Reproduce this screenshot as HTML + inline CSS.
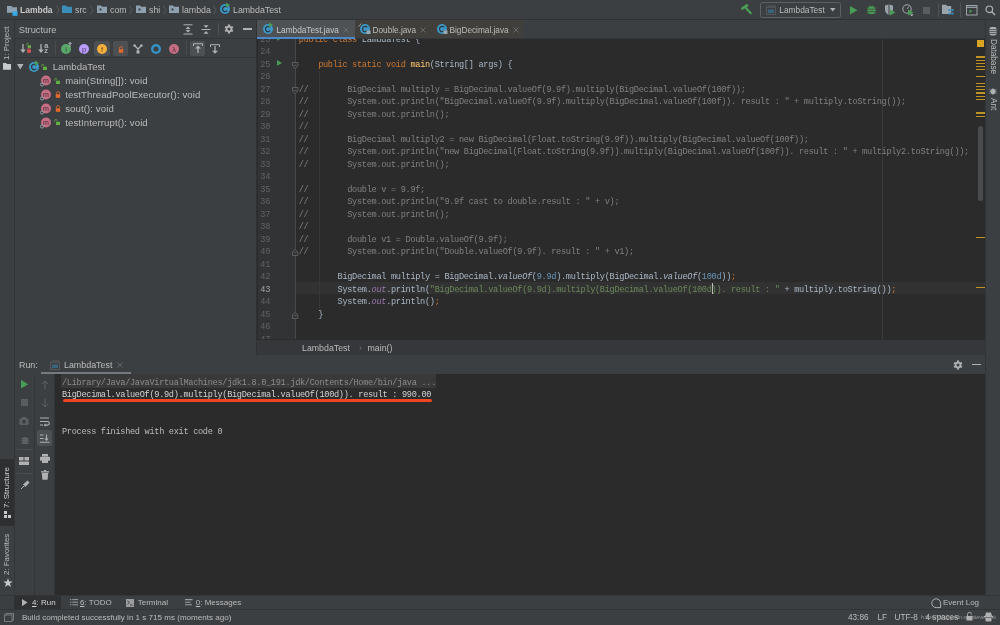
<!DOCTYPE html>
<html><head><meta charset="utf-8">
<style>
*{margin:0;padding:0;box-sizing:border-box}
html,body{width:1000px;height:625px;overflow:hidden;background:#3c3f41}
body{will-change:transform;position:relative;font-family:"Liberation Sans",sans-serif;color:#bbbbbb}
.a{position:absolute}
svg{position:absolute;overflow:visible}
.t{position:absolute;white-space:nowrap;line-height:1}
#topbar{left:0;top:0;width:1000px;height:20px;background:#3c3f41;border-bottom:1px solid #2f3133}
#leftstrip{left:0;top:20px;width:15px;height:575px;background:#3c3f41;border-right:1px solid #323436}
#struct{left:15px;top:20px;width:242px;height:335px;background:#3c3f41;border-right:1px solid #2f3133}
#editor{left:257px;top:20px;width:728px;height:335px;background:#2b2b2b;overflow:hidden}
#rightstrip{left:985px;top:20px;width:15px;height:575px;background:#3c3f41;border-left:1px solid #323436}
#run{left:15px;top:355px;width:970px;height:240px;background:#2b2b2b;overflow:hidden}
#bottombar{left:0;top:595px;width:1000px;height:14px;background:#3c3f41;border-top:1px solid #323436}
#status{left:0;top:609px;width:1000px;height:16px;background:#3c3f41;border-top:1px solid #323436}
.cl{position:absolute;left:0;height:12.505px;line-height:12.505px;white-space:pre;font-family:"Liberation Mono",monospace;font-size:8.6px;letter-spacing:-0.3px}
.ln{position:absolute;left:0;width:13.0px;text-align:right;height:12.505px;line-height:12.505px;font-family:"Liberation Mono",monospace;font-size:8.6px;letter-spacing:-0.3px}
</style></head><body>
<div id="topbar" class="a">
<svg style="left:7px;top:5.6px" width="11" height="10"><path d="M0 0h4.5l1 1.3h4.5v5.5h-10z" fill="#8fa1b0"/><rect x="5.5" y="5.2" width="5" height="4.6" fill="#3ba8e6"/></svg>
<div class="t" style="left:20px;top:6.0px;font-size:8.5px;color:#c8c8c8;"><b>Lambda</b></div>
<svg style="left:55.5px;top:5px" width="4" height="10"><path d="M0.5 0.5l2.5 4.5l-2.5 4.5" stroke="#5a5d60" stroke-width="0.8" fill="none"/></svg>
<svg style="left:62px;top:4.6px" width="10" height="8"><path d="M0 0.5h4l1 1.2h5v6.3h-10z" fill="#3b8dba"/></svg>
<div class="t" style="left:75px;top:6.0px;font-size:8.8px;color:#bbbbbb;">src</div>
<svg style="left:89.5px;top:5px" width="4" height="10"><path d="M0.5 0.5l2.5 4.5l-2.5 4.5" stroke="#5a5d60" stroke-width="0.8" fill="none"/></svg>
<svg style="left:97px;top:4.6px" width="10" height="8"><path d="M0 0.5h4l1 1.2h5v6.3h-10z" fill="#8fa1b0"/><rect x="2.5" y="3.5" width="2" height="2" fill="#3c3f41"/></svg>
<div class="t" style="left:110px;top:6.0px;font-size:8.8px;color:#bbbbbb;">com</div>
<svg style="left:129.3px;top:5px" width="4" height="10"><path d="M0.5 0.5l2.5 4.5l-2.5 4.5" stroke="#5a5d60" stroke-width="0.8" fill="none"/></svg>
<svg style="left:136px;top:4.6px" width="10" height="8"><path d="M0 0.5h4l1 1.2h5v6.3h-10z" fill="#8fa1b0"/><rect x="2.5" y="3.5" width="2" height="2" fill="#3c3f41"/></svg>
<div class="t" style="left:149px;top:6.0px;font-size:8.8px;color:#bbbbbb;">shi</div>
<svg style="left:163px;top:5px" width="4" height="10"><path d="M0.5 0.5l2.5 4.5l-2.5 4.5" stroke="#5a5d60" stroke-width="0.8" fill="none"/></svg>
<svg style="left:169px;top:4.6px" width="10" height="8"><path d="M0 0.5h4l1 1.2h5v6.3h-10z" fill="#8fa1b0"/><rect x="2.5" y="3.5" width="2" height="2" fill="#3c3f41"/></svg>
<div class="t" style="left:182px;top:6.0px;font-size:8.8px;color:#bbbbbb;">lambda</div>
<svg style="left:213px;top:5px" width="4" height="10"><path d="M0.5 0.5l2.5 4.5l-2.5 4.5" stroke="#5a5d60" stroke-width="0.8" fill="none"/></svg>
<svg style="left:220px;top:4.3px" width="10" height="10"><circle cx="5" cy="5" r="5" fill="#3d98c6"/><path d="M7.2 3.4a2.6 2.6 0 1 0 0 3.2" stroke="#2b3a45" stroke-width="1.3" fill="none"/><path d="M6 -1.5l4 2.5l-4 2.5z" fill="#499c54"/></svg>
<div class="t" style="left:233px;top:6.0px;font-size:8.8px;color:#bbbbbb;">LambdaTest</div>
<svg style="left:740px;top:3px" width="13" height="13"><path d="M2.3 5.5L7 2.4" stroke="#4a9f55" stroke-width="2.6" stroke-linecap="round"/><path d="M5.4 4.5L10.8 10.2" stroke="#4a9f55" stroke-width="2.1" stroke-linecap="round"/></svg>
<div class="a" style="left:760px;top:2px;width:81px;height:15.5px;border:1px solid #5e6163;border-radius:2.5px"></div>
<svg style="left:766px;top:5px" width="11" height="10"><path d="M1.5 1h8" stroke="#5d6063" stroke-width="0.8"/><rect x="0.5" y="2.2" width="9" height="7.3" fill="#3c3f41" stroke="#5d6063" stroke-width="0.8"/><rect x="2" y="4.5" width="6" height="3.5" fill="#3a6580"/></svg>
<div class="t" style="left:779.3px;top:6.2px;font-size:8.35px;color:#bbbbbb;">LambdaTest</div>
<svg style="left:830px;top:8px" width="6" height="4"><path d="M0 0h5.5l-2.75 3.5z" fill="#afb1b3"/></svg>
<svg style="left:850px;top:5.5px" width="8" height="9"><path d="M0 0l7.5 4.3l-7.5 4.3z" fill="#499c54"/></svg>
<svg style="left:866px;top:4px" width="11" height="11"><ellipse cx="5.5" cy="6.3" rx="3.3" ry="4" fill="#499c54"/><path d="M1 4h9M0.8 6.5h9.4M1 9h9M3.5 1.5l1 1.5M7.5 1.5l-1 1.5" stroke="#499c54" stroke-width="0.9"/><path d="M3 5.3h5M3 7.6h5" stroke="#3c3f41" stroke-width="0.7"/></svg>
<svg style="left:884px;top:4px" width="12" height="12"><path d="M1 1.5l4-1l4 1v4c0 3-2 4.5-4 5.5c-2-1-4-2.5-4-5.5z" fill="#9aa3aa"/><path d="M5 0.5v10.5" stroke="#3c3f41" stroke-width="1"/><path d="M6 5.5l5.5 3l-5.5 3z" fill="#499c54"/></svg>
<svg style="left:902px;top:4px" width="12" height="12"><circle cx="5" cy="5" r="4.2" fill="none" stroke="#9aa3aa" stroke-width="1.1"/><path d="M5 5l1.8-2.5" stroke="#9aa3aa" stroke-width="1"/><path d="M6 5.5l5.5 3l-5.5 3z" fill="#499c54"/><path d="M8 10.5h3.5l-1.75 1.5z" fill="#ddd"/></svg>
<div class="a" style="left:922.5px;top:7px;width:7px;height:6.5px;background:#5a5c5e"></div>
<div class="a" style="left:937.5px;top:3px;width:1px;height:14px;background:#515456"></div>
<svg style="left:942px;top:4px" width="12" height="12"><path d="M0 0.8h4.2l1 1.2h4v8h-9.2z" fill="#9aa3aa"/><rect x="6.5" y="5" width="2" height="2" fill="#3592c4"/><rect x="9.5" y="5" width="2" height="2" fill="#3592c4"/><rect x="6.5" y="8.5" width="2" height="2" fill="#3592c4"/><rect x="9.5" y="8.5" width="2" height="2" fill="#3592c4"/></svg>
<div class="a" style="left:960px;top:3px;width:1px;height:14px;background:#515456"></div>
<svg style="left:966px;top:4.5px" width="12" height="11"><rect x="0.5" y="0.5" width="10.5" height="9.5" fill="none" stroke="#9aa3aa" stroke-width="1"/><path d="M0.5 2.3h10.5" stroke="#9aa3aa" stroke-width="1.2"/><path d="M3.5 4.5l3 1.8l-3 1.8z" fill="#499c54"/></svg>
<svg style="left:985px;top:4.5px" width="11" height="11"><circle cx="4.3" cy="4.3" r="3.3" fill="none" stroke="#afb1b3" stroke-width="1.2"/><path d="M6.8 6.8l3.2 3.2" stroke="#afb1b3" stroke-width="1.4"/></svg>
</div>
<div id="leftstrip" class="a"></div>
<div id="struct" class="a">
  <div class="a" style="left:0;top:0;width:241px;height:19px;border-bottom:1px solid #323436"></div>
  <div class="a" style="left:0;top:19px;width:241px;height:19px;border-bottom:1px solid #323436"></div>
</div>
<div id="editor" class="a">
  <div class="a" style="left:0;top:0;width:729px;height:19px;background:#3c3f41"></div>
  <div class="a" style="left:0;top:0;width:97.5px;height:19px;background:#4e5254"></div>
  <div class="a" style="left:97.5px;top:0;width:168px;height:18px;background:#403f3c"></div>
  <div class="a" style="left:0;top:18px;width:728px;height:1px;background:#333537"></div>
  <div class="a" style="left:0;top:16.5px;width:97.5px;height:2.5px;background:#4a88c7"></div>
  <div id="view" class="a" style="left:0;top:19px;width:729px;height:300px;overflow:hidden">
    <div class="a" style="left:0;top:0;width:38px;height:300px;background:#313335;border-left:1px solid #2b2b2b"></div>
    <div class="a" style="left:38px;top:0;width:1px;height:300px;background:#45484a"></div>
    <div class="a" style="left:39px;top:243.3px;width:690px;height:12.1px;background:#323232"></div>
    <div class="a" style="left:625px;top:0;width:1px;height:300px;background:#3b3b3b"></div>
    <div class="a" style="left:0;top:-5.255px;width:34px;height:320px">
<div class="ln" style="top:0.00px;color:#606366">23</div>
<div class="ln" style="top:12.51px;color:#606366">24</div>
<div class="ln" style="top:25.01px;color:#606366">25</div>
<div class="ln" style="top:37.52px;color:#606366">26</div>
<div class="ln" style="top:50.02px;color:#606366">27</div>
<div class="ln" style="top:62.53px;color:#606366">28</div>
<div class="ln" style="top:75.03px;color:#606366">29</div>
<div class="ln" style="top:87.54px;color:#606366">30</div>
<div class="ln" style="top:100.04px;color:#606366">31</div>
<div class="ln" style="top:112.55px;color:#606366">32</div>
<div class="ln" style="top:125.05px;color:#606366">33</div>
<div class="ln" style="top:137.56px;color:#606366">34</div>
<div class="ln" style="top:150.06px;color:#606366">35</div>
<div class="ln" style="top:162.56px;color:#606366">36</div>
<div class="ln" style="top:175.07px;color:#606366">37</div>
<div class="ln" style="top:187.58px;color:#606366">38</div>
<div class="ln" style="top:200.08px;color:#606366">39</div>
<div class="ln" style="top:212.59px;color:#606366">40</div>
<div class="ln" style="top:225.09px;color:#606366">41</div>
<div class="ln" style="top:237.60px;color:#606366">42</div>
<div class="ln" style="top:250.10px;color:#a4a3a3">43</div>
<div class="ln" style="top:262.61px;color:#606366">44</div>
<div class="ln" style="top:275.11px;color:#606366">45</div>
<div class="ln" style="top:287.62px;color:#606366">46</div>
<div class="ln" style="top:300.12px;color:#606366">47</div>
    </div>
    <div class="a" style="left:41.7px;top:-5.255px;width:690px;height:320px">
<div class="cl" style="top:0.00px"><span style="color:#cc7832">public class </span><span style="color:#a9b7c6">LambdaTest {</span></div>
<div class="cl" style="top:12.51px"></div>
<div class="cl" style="top:25.01px">    <span style="color:#cc7832">public static void </span><span style="color:#ffc66d">main</span><span style="color:#a9b7c6">(String[] args) {</span></div>
<div class="cl" style="top:37.52px"></div>
<div class="cl" style="top:50.02px"><span style="color:#808080">//        BigDecimal multiply = BigDecimal.valueOf(9.9f).multiply(BigDecimal.valueOf(100f));</span></div>
<div class="cl" style="top:62.53px"><span style="color:#808080">//        System.out.println("BigDecimal.valueOf(9.9f).multiply(BigDecimal.valueOf(100f)). result : " + multiply.toString());</span></div>
<div class="cl" style="top:75.03px"><span style="color:#808080">//        System.out.println();</span></div>
<div class="cl" style="top:87.54px"><span style="color:#808080">//</span></div>
<div class="cl" style="top:100.04px"><span style="color:#808080">//        BigDecimal multiply2 = new BigDecimal(Float.toString(9.9f)).multiply(BigDecimal.valueOf(100f));</span></div>
<div class="cl" style="top:112.55px"><span style="color:#808080">//        System.out.println("new BigDecimal(Float.toString(9.9f)).multiply(BigDecimal.valueOf(100f)). result : " + multiply2.toString());</span></div>
<div class="cl" style="top:125.05px"><span style="color:#808080">//        System.out.println();</span></div>
<div class="cl" style="top:137.56px"></div>
<div class="cl" style="top:150.06px"><span style="color:#808080">//        double v = 9.9f;</span></div>
<div class="cl" style="top:162.56px"><span style="color:#808080">//        System.out.println("9.9f cast to double.result : " + v);</span></div>
<div class="cl" style="top:175.07px"><span style="color:#808080">//        System.out.println();</span></div>
<div class="cl" style="top:187.58px"><span style="color:#808080">//</span></div>
<div class="cl" style="top:200.08px"><span style="color:#808080">//        double v1 = Double.valueOf(9.9f);</span></div>
<div class="cl" style="top:212.59px"><span style="color:#808080">//        System.out.println("Double.valueOf(9.9f). result : " + v1);</span></div>
<div class="cl" style="top:225.09px"></div>
<div class="cl" style="top:237.60px">        <span style="color:#a9b7c6">BigDecimal multiply = BigDecimal.</span><span style="color:#a9b7c6;font-style:italic">valueOf</span><span style="color:#a9b7c6">(</span><span style="color:#6897bb">9.9d</span><span style="color:#a9b7c6">).multiply(BigDecimal.</span><span style="color:#a9b7c6;font-style:italic">valueOf</span><span style="color:#a9b7c6">(</span><span style="color:#6897bb">100d</span><span style="color:#a9b7c6">))</span><span style="color:#cc7832">;</span></div>
<div class="cl" style="top:250.10px">        <span style="color:#a9b7c6">System.</span><span style="color:#9876aa;font-style:italic">out</span><span style="color:#a9b7c6">.println(</span><span style="color:#6a8759">"BigDecimal.valueOf(9.9d).multiply(BigDecimal.valueOf(100d)). result : "</span><span style="color:#a9b7c6"> + multiply.toString())</span><span style="color:#cc7832">;</span></div>
<div class="cl" style="top:262.61px">        <span style="color:#a9b7c6">System.</span><span style="color:#9876aa;font-style:italic">out</span><span style="color:#a9b7c6">.println()</span><span style="color:#cc7832">;</span></div>
<div class="cl" style="top:275.11px">    <span style="color:#a9b7c6">}</span></div>
<div class="cl" style="top:287.62px"></div>
<div class="cl" style="top:300.12px"></div>
    </div>
  </div>
  <div class="a" style="left:0;top:319.5px;width:729px;height:15.5px;background:#35373a"></div>
  <div class="t" style="left:45px;top:323.5px;font-size:8.8px">LambdaTest</div>
  <div class="t" style="left:102px;top:323.5px;font-size:8.8px;color:#777">›</div>
  <div class="t" style="left:110.5px;top:323.5px;font-size:8.8px">main()</div>
</div>
<div id="rightstrip" class="a"></div>
<div class="t" style="left:18.8px;top:25.5px;font-size:9.3px;color:#bbbbbb;">Structure</div>
<svg style="left:183px;top:24px" width="10" height="11"><path d="M0.5 0.8h9M0.5 10h9" stroke="#afb1b3" stroke-width="1"/><path d="M5 2.5l-2.5 2.5h5zM5 8.5l-2.5-2.5h5z" fill="#afb1b3"/></svg>
<svg style="left:201px;top:24px" width="10" height="11"><path d="M0.5 5.5h9" stroke="#afb1b3" stroke-width="1"/><path d="M5 4l-2.5-2.8h5zM5 7l-2.5 2.8h5z" fill="#afb1b3"/></svg>
<div class="a" style="left:217.5px;top:23px;width:1px;height:12px;background:#515456"></div>
<svg style="left:224px;top:24.3px" width="10" height="10"><path d="M3.73 0.58 L6.27 0.58 L5.91 1.72 L7.38 2.57 L8.19 1.69 L9.46 3.89 L8.29 4.15 L8.29 5.85 L9.46 6.11 L8.19 8.31 L7.38 7.43 L5.91 8.28 L6.27 9.42 L3.73 9.42 L4.09 8.28 L2.62 7.43 L1.81 8.31 L0.54 6.11 L1.71 5.85 L1.71 4.15 L0.54 3.89 L1.81 1.69 L2.62 2.57 L4.09 1.72Z" fill="#afb1b3"/><circle cx="5" cy="5" r="1.5" fill="#3c3f41"/></svg>
<div class="a" style="left:243.3px;top:28.3px;width:8.7px;height:1.7px;background:#afb1b3"></div>
<svg style="left:19.5px;top:43px" width="12" height="11"><path d="M3 1v6.5" stroke="#afb1b3" stroke-width="1.3"/><path d="M0.2 6.6h5.6l-2.8 3.4z" fill="#afb1b3"/><path d="M6.6 2.2V1.4a1 1 0 0 1 2 0" stroke="#62b543" stroke-width="0.8" fill="none"/><rect x="7.6" y="2.3" width="3.4" height="2.6" fill="#62b543"/><path d="M7.8 7V6a1.1 1.1 0 0 1 2.2 0v1" stroke="#e05555" stroke-width="0.8" fill="none"/><rect x="7.2" y="6.8" width="3.6" height="3" fill="#e05555"/></svg>
<svg style="left:38px;top:43px" width="12" height="11"><path d="M3 1v6.5" stroke="#afb1b3" stroke-width="1.3"/><path d="M0.2 6.6h5.6l-2.8 3.4z" fill="#afb1b3"/><text x="8.2" y="5" font-size="7.4" text-anchor="middle" fill="#afb1b3" font-family="Liberation Sans" font-weight="bold">a</text><text x="8.2" y="10.3" font-size="7.4" text-anchor="middle" fill="#afb1b3" font-family="Liberation Sans" font-weight="bold">z</text></svg>
<div class="a" style="left:54.5px;top:41px;width:1px;height:14px;background:#4a4d4f"></div>
<svg style="left:61px;top:43.5px" width="10" height="10"><circle cx="5" cy="5" r="5" fill="#59a869"/><text x="5" y="7.6" font-size="7.5" text-anchor="middle" fill="#2d4a31" font-family="Liberation Sans">i</text></svg>
<svg style="left:68px;top:42px" width="4" height="5"><path d="M2 0.5v4M0.5 2l1.5-1.5l1.5 1.5" stroke="#c9d2d8" stroke-width="0.9" fill="none"/></svg>
<svg style="left:79px;top:43.5px" width="10" height="10"><circle cx="5" cy="5" r="5" fill="#b99bf8"/><text x="5" y="7.6" font-size="7.5" text-anchor="middle" fill="#4a3a6a" font-family="Liberation Sans">p</text></svg>
<div class="a" style="left:94.3px;top:41px;width:15.5px;height:15px;background:#4c5052;border-radius:2px"></div>
<svg style="left:97px;top:43.5px" width="10" height="10"><circle cx="5" cy="5" r="5" fill="#f4af3d"/><text x="5" y="7.6" font-size="7.5" text-anchor="middle" fill="#6a4a1a" font-family="Liberation Sans">f</text></svg>
<div class="a" style="left:112.5px;top:41px;width:15.5px;height:15px;background:#4c5052;border-radius:2px"></div>
<svg style="left:117.5px;top:45.5px" width="6" height="8"><path d="M1.4 3.2V2.2a1.6 1.6 0 0 1 3.2 0v1" stroke="#e06b2b" stroke-width="0.8" fill="none"/><rect x="0.8" y="3.2" width="4.4" height="3.6" fill="#e06b2b"/></svg>
<svg style="left:133px;top:43.5px" width="10" height="10"><path d="M1.5 1.5l3.5 3.5l3.5-3.5M5 5v4" stroke="#afb1b3" stroke-width="1.3" fill="none"/><circle cx="1.5" cy="1.5" r="1.2" fill="#afb1b3"/><circle cx="8.5" cy="1.5" r="1.2" fill="#afb1b3"/><rect x="3.5" y="6.5" width="3" height="3" fill="#afb1b3"/></svg>
<svg style="left:151px;top:43.5px" width="10" height="10"><circle cx="5" cy="5" r="3.8" fill="none" stroke="#3592c4" stroke-width="2.4"/></svg>
<svg style="left:169px;top:43.5px" width="10" height="10"><circle cx="5" cy="5" r="5" fill="#c36e84"/><text x="5" y="7.6" font-size="7.5" text-anchor="middle" fill="#5a2a37" font-family="Liberation Sans">λ</text></svg>
<div class="a" style="left:185.5px;top:41px;width:1px;height:14px;background:#4a4d4f"></div>
<div class="a" style="left:189.8px;top:41px;width:15px;height:15px;background:#4c5052;border-radius:2px"></div>
<svg style="left:192.5px;top:43px" width="10" height="11"><path d="M0.5 3V0.7h9V3" stroke="#afb1b3" stroke-width="1" fill="none"/><path d="M5 10V4" stroke="#afb1b3" stroke-width="1.3"/><path d="M2 5.5l3-3l3 3z" fill="#afb1b3"/></svg>
<svg style="left:210px;top:44px" width="10" height="11"><path d="M0.5 3V0.7h9V3" stroke="#afb1b3" stroke-width="1" fill="none"/><path d="M5 2v6" stroke="#afb1b3" stroke-width="1.3"/><path d="M2 6.8l3 3l3-3z" fill="#afb1b3"/></svg>
<svg style="left:17px;top:63.5px" width="7" height="6"><path d="M0 0h6.5l-3.25 5.5z" fill="#afb1b3"/></svg>
<svg style="left:29px;top:61.5px" width="10" height="10"><circle cx="5" cy="5" r="5" fill="#3d98c6"/><path d="M7.2 3.4a2.6 2.6 0 1 0 0 3.2" stroke="#2b3a45" stroke-width="1.3" fill="none"/><path d="M6 -1.5l4 2.5l-4 2.5z" fill="#499c54"/></svg>
<svg style="left:41px;top:63.5px" width="7" height="7"><path d="M0.7 2.6V1.6a1.1 1.1 0 0 1 2.2 0" stroke="#62b543" stroke-width="0.8" fill="none"/><rect x="2.1" y="2.7" width="3.8" height="3.3" fill="#62b543"/></svg>
<div class="t" style="left:52.7px;top:62.1px;font-size:9.6px;color:#bbbbbb;">LambdaTest</div>
<svg style="left:40.4px;top:75.1px" width="12" height="12"><circle cx="6" cy="5.5" r="5" fill="#c36e84"/><text x="6" y="7.8" font-size="7" text-anchor="middle" fill="#4a2a33" font-family="Liberation Sans">m</text><circle cx="2" cy="9.5" r="1.6" fill="none" stroke="#9aa7b0" stroke-width="0.9"/></svg>
<svg style="left:54px;top:78.0px" width="7" height="7"><path d="M0.7 2.6V1.6a1.1 1.1 0 0 1 2.2 0" stroke="#62b543" stroke-width="0.8" fill="none"/><rect x="2.1" y="2.7" width="3.8" height="3.3" fill="#62b543"/></svg>
<div class="t" style="left:65.2px;top:76.1px;font-size:9.6px;color:#bbbbbb;letter-spacing:0.1px">main(String[]): void</div>
<svg style="left:40.4px;top:88.89999999999999px" width="12" height="12"><circle cx="6" cy="5.5" r="5" fill="#c36e84"/><text x="6" y="7.8" font-size="7" text-anchor="middle" fill="#4a2a33" font-family="Liberation Sans">m</text><circle cx="2" cy="9.5" r="1.6" fill="none" stroke="#9aa7b0" stroke-width="0.9"/></svg>
<svg style="left:54.5px;top:90.8px" width="6" height="8"><path d="M1.4 3.2V2.2a1.6 1.6 0 0 1 3.2 0v1" stroke="#e06b2b" stroke-width="0.8" fill="none"/><rect x="0.8" y="3.2" width="4.4" height="3.6" fill="#e06b2b"/></svg>
<div class="t" style="left:65.2px;top:89.89999999999999px;font-size:9.6px;color:#bbbbbb;letter-spacing:0.1px">testThreadPoolExecutor(): void</div>
<svg style="left:40.4px;top:102.69999999999999px" width="12" height="12"><circle cx="6" cy="5.5" r="5" fill="#c36e84"/><text x="6" y="7.8" font-size="7" text-anchor="middle" fill="#4a2a33" font-family="Liberation Sans">m</text><circle cx="2" cy="9.5" r="1.6" fill="none" stroke="#9aa7b0" stroke-width="0.9"/></svg>
<svg style="left:54.5px;top:104.6px" width="6" height="8"><path d="M1.4 3.2V2.2a1.6 1.6 0 0 1 3.2 0v1" stroke="#e06b2b" stroke-width="0.8" fill="none"/><rect x="0.8" y="3.2" width="4.4" height="3.6" fill="#e06b2b"/></svg>
<div class="t" style="left:65.2px;top:103.69999999999999px;font-size:9.6px;color:#bbbbbb;letter-spacing:0.1px">sout(): void</div>
<svg style="left:40.4px;top:116.5px" width="12" height="12"><circle cx="6" cy="5.5" r="5" fill="#c36e84"/><text x="6" y="7.8" font-size="7" text-anchor="middle" fill="#4a2a33" font-family="Liberation Sans">m</text><circle cx="2" cy="9.5" r="1.6" fill="none" stroke="#9aa7b0" stroke-width="0.9"/></svg>
<svg style="left:54px;top:119.4px" width="7" height="7"><path d="M0.7 2.6V1.6a1.1 1.1 0 0 1 2.2 0" stroke="#62b543" stroke-width="0.8" fill="none"/><rect x="2.1" y="2.7" width="3.8" height="3.3" fill="#62b543"/></svg>
<div class="t" style="left:65.2px;top:117.5px;font-size:9.6px;color:#bbbbbb;letter-spacing:0.1px">testInterrupt(): void</div>
<div id="run" class="a">
  <div class="a" style="left:0;top:0;width:972px;height:19px;background:#3c3f41"></div>
  <div class="a" style="left:0;top:19px;width:20px;height:221px;background:#3c3f41;border-right:1px solid #333537"></div>
  <div class="a" style="left:20px;top:19px;width:20px;height:221px;background:#3c3f41;border-right:1px solid #333537"></div>
</div>
<div id="bottombar" class="a"></div>
<div id="status" class="a"></div>
<div class="t" style="left:3.4px;top:59.5px;font-size:7.9px;color:#bbbbbb;transform-origin:0 0;transform:rotate(-90deg)">1: Project</div>
<svg style="left:3.2px;top:63px" width="8" height="7"><path d="M0 0h3l1 1h4v5.8h-8z" fill="#c7c9cb"/></svg>
<div class="a" style="left:0;top:459px;width:14px;height:67px;background:#2d2f31"></div>
<div class="t" style="left:3.4px;top:508.3px;font-size:7.9px;color:#d0d0d0;transform-origin:0 0;transform:rotate(-90deg)">7: Structure</div>
<svg style="left:4px;top:511.3px" width="7" height="7"><rect x="0" y="0" width="3" height="3" fill="#c7c9cb"/><rect x="0" y="4" width="3" height="3" fill="#c7c9cb"/><rect x="4" y="4" width="3" height="3" fill="#c7c9cb"/></svg>
<div class="t" style="left:3.4px;top:574.8px;font-size:7.9px;color:#bbbbbb;transform-origin:0 0;transform:rotate(-90deg)">2: Favorites</div>
<svg style="left:2.5px;top:577.5px" width="10" height="10"><path d="M5 0l1.2 3.4h3.6l-2.9 2.2l1.1 3.5l-3-2.2l-3 2.2l1.1-3.5l-2.9-2.2h3.6z" fill="#c7c9cb"/></svg>
<svg style="left:989px;top:26.5px" width="8" height="9"><rect x="0.5" y="0" width="7" height="8.5" rx="2" fill="#afb1b3"/><path d="M0.5 2.6h7M0.5 4.6h7M0.5 6.6h7" stroke="#3c3f41" stroke-width="0.8"/></svg>
<div class="t" style="left:988.5px;top:39px;font-size:8.2px;color:#bbbbbb;transform-origin:0 0;transform:rotate(90deg) translateY(-100%)">Database</div>
<svg style="left:989px;top:86.5px" width="8" height="8"><ellipse cx="4" cy="4.5" rx="2.2" ry="3" fill="#afb1b3"/><path d="M0.5 2.5l7 4M7.5 2.5l-7 4M0.5 4.5h7" stroke="#afb1b3" stroke-width="0.7"/></svg>
<div class="t" style="left:988.5px;top:97.5px;font-size:8.2px;color:#bbbbbb;transform-origin:0 0;transform:rotate(90deg) translateY(-100%)">Ant</div>
<div class="a" style="left:976.8px;top:40px;width:7.2px;height:7.3px;background:#d8a424"></div>
<div class="a" style="left:975.5px;top:56.3px;width:9.5px;height:1.3px;background:#c19322"></div>
<div class="a" style="left:975.5px;top:59.5px;width:9.5px;height:1.3px;background:#c19322"></div>
<div class="a" style="left:975.5px;top:62.5px;width:9.5px;height:1.3px;background:#c19322"></div>
<div class="a" style="left:975.5px;top:65.9px;width:9.5px;height:1.3px;background:#c19322"></div>
<div class="a" style="left:975.5px;top:69.2px;width:9.5px;height:1.3px;background:#c19322"></div>
<div class="a" style="left:975.5px;top:75.8px;width:9.5px;height:1.3px;background:#c19322"></div>
<div class="a" style="left:975.5px;top:82.5px;width:9.5px;height:1.3px;background:#c19322"></div>
<div class="a" style="left:975.5px;top:85.7px;width:9.5px;height:1.3px;background:#c19322"></div>
<div class="a" style="left:975.5px;top:89.1px;width:9.5px;height:1.3px;background:#c19322"></div>
<div class="a" style="left:975.5px;top:92.3px;width:9.5px;height:1.3px;background:#c19322"></div>
<div class="a" style="left:975.5px;top:95.6px;width:9.5px;height:1.3px;background:#c19322"></div>
<div class="a" style="left:975.5px;top:99.2px;width:9.5px;height:1.3px;background:#c19322"></div>
<div class="a" style="left:975.5px;top:112.3px;width:9.5px;height:1.3px;background:#c19322"></div>
<div class="a" style="left:975.5px;top:115.5px;width:9.5px;height:1.3px;background:#c19322"></div>
<div class="a" style="left:975.5px;top:237.2px;width:9.5px;height:1.3px;background:#c19322"></div>
<div class="a" style="left:975.5px;top:287.0px;width:9.5px;height:1.3px;background:#c19322"></div>
<div class="a" style="left:978.2px;top:126px;width:5.3px;height:75px;background:#4a4b4c;border-radius:2.6px"></div>
<div class="t" style="left:19px;top:360.8px;font-size:8.9px;color:#bbbbbb;">Run:</div>
<svg style="left:50.3px;top:360px" width="11" height="10"><path d="M1.5 1h8" stroke="#5d6063" stroke-width="0.8"/><rect x="0.5" y="2.2" width="9" height="7.3" fill="#3c3f41" stroke="#5d6063" stroke-width="0.8"/><rect x="2" y="4.5" width="6" height="3.5" fill="#3a6580"/></svg>
<div class="t" style="left:64px;top:360.8px;font-size:8.9px;color:#bbbbbb;">LambdaTest</div>
<svg style="left:117px;top:362px" width="6" height="6"><path d="M0.5 0.5l5 5M5.5 0.5l-5 5" stroke="#6a6d70" stroke-width="0.9"/></svg>
<div class="a" style="left:41.4px;top:372.3px;width:89.2px;height:2.2px;background:#747a80"></div>
<svg style="left:952.8px;top:359.8px" width="10" height="10"><path d="M3.73 0.58 L6.27 0.58 L5.91 1.72 L7.38 2.57 L8.19 1.69 L9.46 3.89 L8.29 4.15 L8.29 5.85 L9.46 6.11 L8.19 8.31 L7.38 7.43 L5.91 8.28 L6.27 9.42 L3.73 9.42 L4.09 8.28 L2.62 7.43 L1.81 8.31 L0.54 6.11 L1.71 5.85 L1.71 4.15 L0.54 3.89 L1.81 1.69 L2.62 2.57 L4.09 1.72Z" fill="#afb1b3"/><circle cx="5" cy="5" r="1.5" fill="#3c3f41"/></svg>
<div class="a" style="left:972px;top:363.7px;width:8.7px;height:1.7px;background:#afb1b3"></div>
<svg style="left:20.5px;top:380px" width="8" height="9"><path d="M0 0l7.3 4.2l-7.3 4.2z" fill="#499c54"/></svg>
<div class="a" style="left:20.5px;top:398.5px;width:7px;height:7px;background:#5a5c5e"></div>
<svg style="left:19px;top:416.5px" width="10" height="8"><rect x="0.5" y="1.5" width="9" height="6.5" rx="1" fill="#5e6163"/><circle cx="5" cy="4.7" r="2" fill="#3c3f41"/><rect x="3" y="0" width="4" height="2" fill="#5e6163"/></svg>
<svg style="left:19.5px;top:434.5px" width="10" height="10"><ellipse cx="5" cy="5.5" rx="3" ry="3.6" fill="#5e6163"/><path d="M1 3.5h8M1 6h8M1 8.5h8" stroke="#5e6163" stroke-width="0.9"/></svg>
<div class="a" style="left:17px;top:449.3px;width:15px;height:1px;background:#4a4d4f"></div>
<svg style="left:19px;top:456.5px" width="10" height="8"><rect x="0" y="0" width="4.5" height="3.5" fill="#afb1b3"/><rect x="5.5" y="0" width="4.5" height="3.5" fill="#afb1b3"/><rect x="0" y="4.5" width="10" height="3.5" fill="#afb1b3"/></svg>
<div class="a" style="left:17px;top:472.5px;width:15px;height:1px;background:#4a4d4f"></div>
<svg style="left:19.5px;top:479.5px" width="10" height="10"><path d="M1 9l3-3" stroke="#afb1b3" stroke-width="1"/><path d="M3 4.5l4.5-4l2 2l-4 4.5z" fill="#afb1b3"/></svg>
<svg style="left:40.5px;top:379.5px" width="8" height="10"><path d="M4 9.5V1M0.8 4.2l3.2-3.2l3.2 3.2" stroke="#5e6163" stroke-width="1" fill="none"/></svg>
<svg style="left:40.5px;top:398px" width="8" height="10"><path d="M4 0.5V9M0.8 5.8l3.2 3.2l3.2-3.2" stroke="#5e6163" stroke-width="1" fill="none"/></svg>
<svg style="left:39.5px;top:417px" width="10" height="9"><path d="M0 1h9M0 4.5h7.5a1.8 1.8 0 0 1 0 3.6h-2.5M0 8h3" stroke="#afb1b3" stroke-width="1.1" fill="none"/><path d="M5.5 6.3l-1.8 1.8l1.8 1.8z" fill="#afb1b3"/></svg>
<div class="a" style="left:37px;top:430px;width:14.5px;height:16px;background:#4c5052;border-radius:2px"></div>
<svg style="left:39.5px;top:433.5px" width="10" height="9"><path d="M0 1h3.5M0 4.5h3.5M0 8.2h9.5M6.5 0.5v5" stroke="#afb1b3" stroke-width="1.1" fill="none"/><path d="M4.3 4.5l2.2 2.5l2.2-2.5z" fill="#afb1b3"/></svg>
<svg style="left:39.5px;top:454px" width="10" height="9"><rect x="2" y="0" width="6" height="2.5" fill="#afb1b3"/><rect x="0" y="2.8" width="10" height="4" rx="0.8" fill="#afb1b3"/><rect x="2" y="6" width="6" height="3" fill="#afb1b3"/></svg>
<svg style="left:40.5px;top:469.5px" width="8" height="10"><rect x="0" y="1.2" width="8" height="1.3" fill="#afb1b3"/><rect x="3" y="0" width="2" height="1.5" fill="#afb1b3"/><path d="M0.8 3h6.4l-0.6 6.8h-5.2z" fill="#afb1b3"/></svg>
<div class="a" style="left:61px;top:374.2px;width:375px;height:13.4px;background:#393939"></div>
<div class="cl" style="left:62px;top:376.70px;color:#8c8c8c">/Library/Java/JavaVirtualMachines/jdk1.8.0_191.jdk/Contents/Home/bin/java ...</div>
<div class="cl" style="left:62px;top:389.10px;color:#d2d2d2">BigDecimal.valueOf(9.9d).multiply(BigDecimal.valueOf(100d)). result : 990.00</div>
<div class="cl" style="left:62px;top:426.30px;color:#bbbbbb">Process finished with exit code 0</div>
<div class="a" style="left:62.5px;top:398.6px;width:369px;height:3.1px;background:#ef4520;border-radius:1.6px"></div>
<div class="a" style="left:14px;top:595.5px;width:47px;height:13.5px;background:#2e3032"></div>
<svg style="left:21.5px;top:598.5px" width="6" height="8"><path d="M0 0l5.5 3.6l-5.5 3.6z" fill="#afb1b3"/></svg>
<div class="t" style="left:32px;top:599.3px;font-size:8.0px;color:#d4d4d4;"><u>4</u>: Run</div>
<svg style="left:70px;top:599px" width="8" height="7"><path d="M0 0.6h1.3M0 3.2h1.3M0 5.8h1.3M2.3 0.6h5.7M2.3 3.2h5.7M2.3 5.8h5.7" stroke="#9a9c9e" stroke-width="1"/></svg>
<div class="t" style="left:80px;top:599.3px;font-size:8.0px;color:#bbbbbb;"><u>6</u>: TODO</div>
<svg style="left:126px;top:598.5px" width="8" height="8"><rect x="0" y="0" width="8" height="8" fill="#9a9c9e"/><path d="M1.5 1.8l2 1.7l-2 1.7M4 6h2.5" stroke="#3c3f41" stroke-width="0.9" fill="none"/></svg>
<div class="t" style="left:137.7px;top:599.3px;font-size:8.0px;color:#bbbbbb;">Terminal</div>
<svg style="left:184.5px;top:599px" width="8" height="7"><path d="M0 0.6h7.5M0 3.2h5.5M0 5.8h7" stroke="#9a9c9e" stroke-width="1.1"/></svg>
<div class="t" style="left:195.8px;top:599.3px;font-size:8.0px;color:#bbbbbb;"><u>0</u>: Messages</div>
<svg style="left:930.5px;top:598px" width="11" height="11"><path d="M9.6 5.2A4.4 4.4 0 1 0 5.2 9.6H9.6Z" fill="none" stroke="#afb1b3" stroke-width="1"/></svg>
<div class="t" style="left:943px;top:599.3px;font-size:8.0px;color:#bbbbbb;">Event Log</div>
<svg style="left:4px;top:613px" width="10" height="9"><rect x="2" y="0.5" width="7.5" height="6.5" fill="none" stroke="#7d8083" stroke-width="0.9"/><rect x="0.5" y="2" width="7.5" height="6.5" fill="#3c3f41" stroke="#7d8083" stroke-width="0.9"/></svg>
<div class="t" style="left:22px;top:614.0px;font-size:8.05px;color:#bbbbbb;">Build completed successfully in 1 s 715 ms (moments ago)</div>
<div class="t" style="left:848px;top:614.0px;font-size:8.2px;color:#bbbbbb;">43:86</div>
<div class="t" style="left:877.5px;top:614.0px;font-size:8.2px;color:#bbbbbb;">LF</div>
<div class="t" style="left:894.5px;top:614.0px;font-size:8.2px;color:#bbbbbb;">UTF-8</div>
<div class="t" style="left:925.5px;top:614.0px;font-size:8.2px;color:#bbbbbb;">4 spaces</div>
<div class="t" style="left:921px;top:614.5px;font-size:5.6px;color:rgba(200,200,200,0.6);letter-spacing:-0.15px">h ttps:/ /blog.csdn.net/stevenzhk</div>
<svg style="left:966px;top:612px" width="7" height="9"><path d="M1.5 4V2.3a2 2 0 0 1 4 0" stroke="#afb1b3" stroke-width="0.9" fill="none"/><rect x="0.5" y="4" width="6" height="4.5" fill="#afb1b3"/></svg>
<svg style="left:983.5px;top:612px" width="9" height="10"><path d="M2 0.5h5l1 3.5h-7z" fill="#afb1b3"/><rect x="0" y="4" width="9" height="1.3" fill="#afb1b3"/><path d="M1.5 6h6v2.5a1 1 0 0 1 -1 1h-4a1 1 0 0 1 -1 -1z" fill="#afb1b3"/></svg><svg style="left:262.9px;top:24px" width="10" height="10"><circle cx="5" cy="5" r="5" fill="#3d98c6"/><path d="M7.2 3.4a2.6 2.6 0 1 0 0 3.2" stroke="#2b3a45" stroke-width="1.3" fill="none"/><path d="M6 -1.5l4 2.5l-4 2.5z" fill="#499c54"/></svg>
<div class="t" style="left:276.5px;top:26.6px;font-size:8.25px;color:#c8c8c8;">LambdaTest.java</div>
<svg style="left:343px;top:27.3px" width="6" height="6"><path d="M0.5 0.5l5 5M5.5 0.5l-5 5" stroke="#6a6d70" stroke-width="0.9"/></svg>
<svg style="left:359.9px;top:24px" width="10" height="10"><circle cx="5" cy="5" r="5" fill="#3d98c6"/><path d="M7.2 3.4a2.6 2.6 0 1 0 0 3.2" stroke="#2b3a45" stroke-width="1.3" fill="none"/><rect x="6.5" y="6.5" width="4" height="3.5" fill="#9aa7b0"/></svg>
<svg style="left:357.5px;top:23px" width="4" height="4"><path d="M0.5 3.5l3-3" stroke="#afb1b3" stroke-width="0.8"/></svg>
<div class="t" style="left:372.5px;top:26.6px;font-size:8.25px;color:#bbbbbb;">Double.java</div>
<svg style="left:420px;top:27.3px" width="6" height="6"><path d="M0.5 0.5l5 5M5.5 0.5l-5 5" stroke="#6a6d70" stroke-width="0.9"/></svg>
<svg style="left:436.9px;top:24px" width="10" height="10"><circle cx="5" cy="5" r="5" fill="#3d98c6"/><path d="M7.2 3.4a2.6 2.6 0 1 0 0 3.2" stroke="#2b3a45" stroke-width="1.3" fill="none"/><rect x="6.5" y="6.5" width="4" height="3.5" fill="#9aa7b0"/></svg>
<div class="t" style="left:449.5px;top:26.6px;font-size:8.25px;color:#bbbbbb;">BigDecimal.java</div>
<svg style="left:513px;top:27.3px" width="6" height="6"><path d="M0.5 0.5l5 5M5.5 0.5l-5 5" stroke="#6a6d70" stroke-width="0.9"/></svg>
<div class="a" style="left:257px;top:39px;width:729px;height:300px;overflow:hidden">
<svg style="left:20.3px;top:-4.3px" width="7" height="8"><path d="M0 0l5 2.9l-5 2.9z" fill="#499c54"/></svg>
<svg style="left:20.3px;top:21.3px" width="7" height="8"><path d="M0 0l5 2.9l-5 2.9z" fill="#499c54"/></svg>
<svg style="left:35px;top:22.8px" width="7" height="7"><path d="M0.5 0.5h5.4v3.6l-2.7 2.4l-2.7-2.4z" fill="#313335" stroke="#65686b" stroke-width="0.8"/><path d="M1.8 3.4h2.8" stroke="#65686b" stroke-width="0.7"/></svg>
<svg style="left:35px;top:47.8px" width="7" height="7"><path d="M0.5 0.5h5.4v3.6l-2.7 2.4l-2.7-2.4z" fill="#313335" stroke="#65686b" stroke-width="0.8"/><path d="M1.8 3.4h2.8" stroke="#65686b" stroke-width="0.7"/></svg>
<svg style="left:35px;top:210.3px" width="7" height="7"><path d="M0.5 6.5h5.4v-3.6l-2.7-2.4l-2.7 2.4z" fill="#313335" stroke="#65686b" stroke-width="0.8"/><path d="M1.8 3.4h2.8" stroke="#65686b" stroke-width="0.7"/></svg>
<svg style="left:35px;top:272.9px" width="7" height="7"><path d="M0.5 6.5h5.4v-3.6l-2.7-2.4l-2.7 2.4z" fill="#313335" stroke="#65686b" stroke-width="0.8"/><path d="M1.8 3.4h2.8" stroke="#65686b" stroke-width="0.7"/></svg>
<div class="a" style="left:62.3px;top:32.3px;width:1px;height:237.6px;background:#373737"></div>
<div class="a" style="left:454.5px;top:244.2px;width:1.3px;height:11px;background:#bbbbbb"></div>
</div>
</body></html>
